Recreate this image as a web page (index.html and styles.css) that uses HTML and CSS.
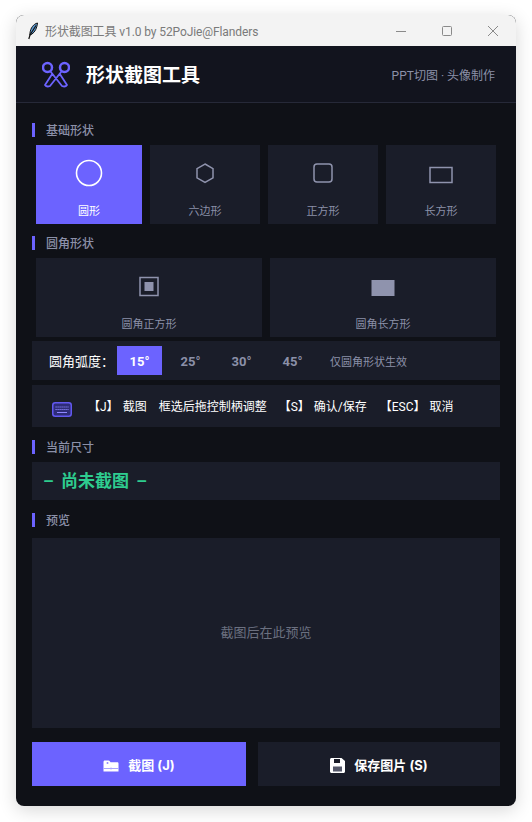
FILE: index.html
```html
<!DOCTYPE html>
<html lang="zh">
<head>
<meta charset="utf-8">
<title>形状截图工具</title>
<link rel="stylesheet" href="styles.css">
</head>
<body>
<div class="window">
  <div class="titlebar">
    <svg class="feather" width="12" height="18" viewBox="0 0 12 18"><path d="M10.500 1C6.500 2 3.500 6 3 11l-.2 2.200L5 12c3-2 5-6 5.500-11z" fill="#5b9bd5" stroke="#111" stroke-width="1"/><path d="M9 3.500 3 13 1.800 17" fill="none" stroke="#111" stroke-width="1.200"/></svg>
    <span class="title-text">形状截图工具 v1.0 by 52PoJie@Flanders</span>
    <div class="controls">
      <svg width="12" height="12" viewBox="0 0 12 12"><path d="M1 6.500h10" stroke="#8a8a8a" fill="none"/></svg>
      <svg width="12" height="12" viewBox="0 0 12 12"><rect x="1.500" y="1.500" width="9" height="9" rx="1" stroke="#8a8a8a" fill="none"/></svg>
      <svg width="12" height="12" viewBox="0 0 12 12"><path d="M1 1l10 10M11 1 1 11" stroke="#8a8a8a" fill="none"/></svg>
    </div>
  </div>
  <header class="header">
    <svg class="logo" width="28" height="28" viewBox="0 0 28 28" fill="none" stroke="#6c63ff" stroke-linejoin="round"><circle cx="5.500" cy="7.500" r="4.500" stroke-width="2.500"/><circle cx="22.500" cy="7.500" r="4.500" stroke-width="2.500"/><path d="M8.500 11.500 20 26q3.500 1.300 5-1L17.500 13.500M19.500 11.500 8 26q-3.500 1.300-5-1l7.500-11.500" stroke-width="1.800"/></svg>
    <h1 class="app-title">形状截图工具</h1>
    <span class="tagline">PPT切图 · 头像制作</span>
  </header>
  <main class="content">
    <div class="section-head first"><span>基础形状</span></div>
    <div class="cards cards-basic">
      <div class="card active">
        <div class="card-icon"><svg width="30" height="30" viewBox="0 0 30 30"><circle cx="15" cy="15" r="12.500" fill="none" stroke="#fff" stroke-width="1.600"/></svg></div>
        <div class="card-label">圆形</div>
      </div>
      <div class="card">
        <div class="card-icon"><svg width="30" height="30" viewBox="0 0 30 30"><path d="M15 6l8 4.600v9.200L15 24.400l-8-4.600v-9.200z" class="shape"/></svg></div>
        <div class="card-label">六边形</div>
      </div>
      <div class="card">
        <div class="card-icon"><svg width="30" height="30" viewBox="0 0 30 30"><rect x="6" y="6" width="18" height="18" rx="3" class="shape"/></svg></div>
        <div class="card-label">正方形</div>
      </div>
      <div class="card">
        <div class="card-icon"><svg width="30" height="30" viewBox="0 0 30 30"><rect x="4" y="9.500" width="22" height="15" class="shape"/></svg></div>
        <div class="card-label">长方形</div>
      </div>
    </div>
    <div class="section-head second"><span>圆角形状</span></div>
    <div class="cards cards-round">
      <div class="card">
        <div class="card-icon"><svg width="30" height="30" viewBox="0 0 30 30"><rect x="6" y="6.500" width="18" height="18" class="shape"/><rect x="10.500" y="11" width="9" height="9" fill="#8f93ad"/></svg></div>
        <div class="card-label">圆角正方形</div>
      </div>
      <div class="card">
        <div class="card-icon"><svg width="30" height="30" viewBox="0 0 30 30"><rect x="3.500" y="9" width="23" height="16" fill="#8f93ad"/></svg></div>
        <div class="card-label">圆角长方形</div>
      </div>
    </div>
    <div class="panel radius-row">
      <span class="radius-label">圆角弧度：</span>
      <span class="radius-opt active">15°</span>
      <span class="radius-opt">25°</span>
      <span class="radius-opt">30°</span>
      <span class="radius-opt">45°</span>
      <span class="radius-note">仅圆角形状生效</span>
    </div>
    <div class="panel keys-row">
      <svg class="kbd" width="20" height="15" viewBox="0 0 20 15"><rect x=".75" y=".75" width="18.500" height="13.500" rx="2.500" fill="#2e2c78" stroke="#6258f0" stroke-width="1.500"/><path d="M3.500 5h13M3.500 7.500h13" stroke="#8f88ff" stroke-dasharray="1.200 .8"/><path d="M5 10.500h10" stroke="#8f88ff"/></svg>
      <span class="key">【J】</span><span class="key-desc">截图</span><span class="key-note">框选后拖控制柄调整</span>
      <span class="key k2">【S】</span><span class="key-desc">确认/保存</span>
      <span class="key k3">【ESC】</span><span class="key-desc">取消</span>
    </div>
    <div class="section-head"><span>当前尺寸</span></div>
    <div class="panel size-panel">– 尚未截图 –</div>
    <div class="section-head"><span>预览</span></div>
    <div class="panel preview">截图后在此预览</div>
    <div class="actions">
      <button class="btn btn-primary">
        <svg class="btn-icon" width="16" height="12" viewBox="0 0 16 12"><path d="M.5 11.500V2C.5 1.200 1 .5 1.800 .5h3.700c.7 0 1.100.4 1.500 1l.5.800h6.800c.7 0 1.200.5 1.200 1.200v8z" fill="#fff"/><circle cx="4.500" cy="3" r="1" fill="#8f88ff"/><path d="M.5 8.500h15M8 7.500v2" stroke="#a9a4ff" fill="none"/></svg>
        <span>截图 (J)</span>
      </button>
      <button class="btn">
        <svg class="btn-icon" width="15" height="15" viewBox="0 0 15 15"><path d="M1.500 0h10L15 3v10.500c0 .8-.7 1.500-1.500 1.500h-12C.7 15 0 14.300 0 13.500v-12C0 .7.700 0 1.500 0z" fill="#fff"/><rect x="4" y="1" width="6" height="4" fill="#1a1d29"/><rect x="3" y="8.500" width="9" height="5" fill="#55586a"/></svg>
        <span>保存图片 (S)</span>
      </button>
    </div>
  </main>
</div>
</body>
</html>
```
FILE: styles.css
```css
* { box-sizing: border-box; }
html, body { margin: 0; padding: 0; background: #fff; }
body {
  width: 532px;
  height: 822px;
  overflow: hidden;
  padding: 15px 16px;
  font-family: "Roboto", "Noto Sans CJK SC", sans-serif;
}
.window {
  width: 500px;
  height: 791px;
  border-radius: 8px;
  overflow: hidden;
  background: #0f1117;
  box-shadow: 0 4px 18px rgba(0, 0, 0, .16);
}
.titlebar {
  height: 31px;
  background: #f3f3f3;
  display: flex;
  align-items: center;
  padding-left: 11px;
}
.feather { flex: none; }
.title-text {
  margin-left: 6px;
  font-size: 12px;
  letter-spacing: -.1px;
  color: #7a7a7a;
  white-space: nowrap;
}
.controls {
  margin-left: auto;
  display: flex;
  align-items: center;
  gap: 34px;
  padding-right: 17px;
}
.header {
  height: 57px;
  background: #12141e;
  border-bottom: 1px solid #262938;
  display: flex;
  align-items: center;
  padding: 0 21px 0 26px;
}
.logo { flex: none; }
.app-title {
  margin: 3px 0 0 16px;
  font-size: 19px;
  line-height: 26px;
  font-weight: 700;
  color: #fff;
}
.tagline {
  margin-left: auto;
  font-size: 12px;
  color: #8b90a8;
  white-space: nowrap;
}
.content { padding: 0 16px; }
.section-head {
  height: 14px;
  margin-top: 13px;
  border-left: 3px solid #6c63ff;
  padding: 0 0 2px 11px;
  display: flex;
  align-items: center;
  font-size: 12px;
  font-weight: 500;
  color: #8b90a8;
}
.section-head.first { margin-top: 20px; }
.section-head.second { margin-top: 12px; }
.cards {
  display: grid;
  gap: 8px;
  margin: 8px 4px 0;
}
.cards-basic { grid-template-columns: 106px 110px 110px 110px; }
.cards-round { grid-template-columns: 226px 226px; }
.card {
  height: 79px;
  background: #1a1d29;
  display: flex;
  flex-direction: column;
  align-items: center;
}
.card.active { background: #6c63ff; }
.card-icon {
  height: 56px;
  display: flex;
  align-items: center;
  justify-content: center;
}
.card-icon svg { display: block; }
.shape { fill: none; stroke: #8f93ad; stroke-width: 1.500; }
.card-label {
  margin-top: 1px;
  font-size: 11px;
  line-height: 20px;
  color: #8b90a8;
}
.card.active .card-label { color: #fff; }
.panel { background: #1a1d29; }
.radius-row {
  height: 39px;
  margin-top: 4px;
  display: flex;
  align-items: center;
  padding-left: 17px;
}
.radius-label {
  width: 68px;
  font-size: 13px;
  color: #fff;
  white-space: nowrap;
}
.radius-opt {
  width: 45px;
  height: 29px;
  margin-right: 6px;
  padding-top: 1px;
  display: flex;
  align-items: center;
  justify-content: center;
  font-size: 13px;
  font-weight: 700;
  color: #8b90a8;
}
.radius-opt.active { background: #6c63ff; color: #fff; }
.radius-note {
  margin-left: 9px;
  font-size: 11px;
  color: #8b90a8;
  white-space: nowrap;
}
.keys-row {
  height: 42px;
  margin-top: 5px;
  display: flex;
  align-items: center;
  padding: 0 0 2px 20px;
  font-size: 12px;
  color: #fff;
  white-space: nowrap;
}
.kbd { flex: none; margin: 8px 16px 0 0; }
.key-desc { margin-left: 4px; }
.key-note { margin-left: 12px; }
.k2 { margin-left: 12px; }
.k3 { margin-left: 13px; }
.size-panel {
  height: 38px;
  margin-top: 8px;
  padding: 0 0 3px 11px;
  display: flex;
  align-items: center;
  font-size: 17px;
  font-weight: 700;
  color: #2ecc8f;
  word-spacing: 3px;
}
.preview {
  height: 190px;
  margin-top: 11px;
  padding-bottom: 4px;
  display: flex;
  align-items: center;
  justify-content: center;
  font-size: 13px;
  color: #6b7080;
}
.actions {
  display: grid;
  grid-template-columns: 214px 242px;
  gap: 12px;
  margin-top: 14px;
}
.btn {
  height: 44px;
  border: 0;
  padding: 1px 0 0;
  background: #1a1d29;
  color: #fff;
  font: 700 13px "Inter", "Noto Sans CJK SC", sans-serif;
  display: flex;
  align-items: center;
  justify-content: center;
  gap: 9px;
}
.btn-icon { margin-top: 2px; }
.btn-primary { background: #6c63ff; }
```
